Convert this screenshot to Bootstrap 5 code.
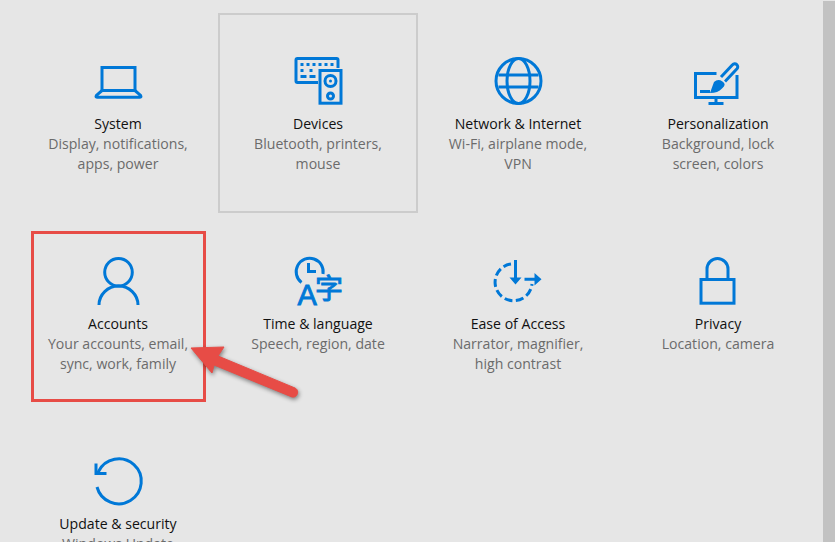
<!DOCTYPE html>
<html lang="en">
<head>
  <meta charset="UTF-8">
  <title>Settings</title>
  <link href="https://cdn.jsdelivr.net/npm/bootstrap@5.3.0/dist/css/bootstrap.min.css" rel="stylesheet">
  <style>
    html, body { height: 100%; }
    body {
      background: #e6e6e6;
      font-family: "Open Sans", "Noto Sans", sans-serif;
      font-size: 14.1px;
      line-height: 20px;
      overflow: hidden;
      position: relative;
    }
    .settings-pane { width: 823px; padding: 13px 0 0 18px; }
    .tile-grid { width: 800px; }
    .tile {
      width: 200px;
      height: 200px;
      border: 2px solid transparent;
      padding-top: 42px;
    }
    .tile.hovered { border-color: #ccc; }
    .tile-ico {
      display: block;
      width: 48px;
      height: 48px;
      margin: 0 auto 9px;
      overflow: visible;
      color: #0078d7;
      fill: none;
      stroke: currentColor;
      stroke-width: 3;
    }
    .tile-ico .solid { fill: currentColor; stroke: none; }
    .tile-ico text { fill: currentColor; stroke-width: .9; }
    .tile-title { color: #111; }
    .tile-desc { color: #6b6b6b; width: 150px; margin: 0 auto; }
    .scroll-thumb { width: 12px; margin-top: 1px; background: #c2c2c2; }
    .callout-box {
      position: absolute;
      left: 31px;
      top: 231px;
      width: 175px;
      height: 171px;
      border: 3px solid #e74c46;
    }
    .callout-arrow {
      position: absolute;
      left: 0;
      top: 0;
      width: 835px;
      height: 542px;
      filter: drop-shadow(1px 2px 2px rgba(0, 0, 0, .45));
    }
  </style>
</head>
<body class="d-flex">

  <div class="settings-pane flex-grow-0">
    <div class="tile-grid d-flex flex-wrap">

      <div class="tile text-center">
        <svg class="tile-ico" viewBox="0 0 48 48">
          <path d="M8 33V10.5H41V33"/>
          <path d="M8 33.5H41L46.6 38.4Q47.6 40.2 46 40.2H3Q1.4 40.2 2.4 38.4Z"/>
        </svg>
        <div class="tile-title">System</div>
        <div class="tile-desc">Display, notifications, apps, power</div>
      </div>

      <div class="tile hovered text-center">
        <svg class="tile-ico" viewBox="0 0 48 48">
          <path d="M24 25.5H3.5Q2 25.5 2 24V3Q2 1.5 3.5 1.5H42.5Q44 1.5 44 3V11"/>
          <rect x="26" y="13.5" width="21" height="32.700"/>
          <circle cx="36.500" cy="24" r="5.500"/>
          <circle class="solid" cx="36.500" cy="24" r="1.500"/>
          <circle cx="36.500" cy="39" r="3"/>
          <path class="solid" d="M6.500 6h3v3h-3zM12.500 6h3v3h-3zM18.500 6h3v3h-3zM24.500 6h3v3h-3zM30.500 6h3v3h-3zM36.500 6h3v3h-3zM6.500 12h3v3h-3zM15.500 12h3v3h-3zM6.500 18h6v3h-6zM15.500 18h6v3h-6z"/>
        </svg>
        <div class="tile-title">Devices</div>
        <div class="tile-desc">Bluetooth, printers, mouse</div>
      </div>

      <div class="tile text-center">
        <svg class="tile-ico" viewBox="0 0 48 48">
          <circle cx="24.500" cy="24" r="22.500"/>
          <ellipse cx="24.500" cy="24" rx="11.500" ry="22.500"/>
          <path d="M4.500 18H44.500M4.500 30H44.500"/>
        </svg>
        <div class="tile-title">Network &amp; Internet</div>
        <div class="tile-desc">Wi-Fi, airplane mode, VPN</div>
      </div>

      <div class="tile text-center">
        <svg class="tile-ico" viewBox="0 0 48 48">
          <path d="M22.500 16.500H1.500V40.500H43V18"/>
          <path d="M22 42V46.500M14.500 46.500H29.500"/>
          <path d="M6 34.500H16"/>
          <path d="M27 20L38.500 7.800A3 3 0 0 1 43 11.800L31 24.500"/>
          <path class="solid" d="M20 25Q24 21.500 28.500 24.500T28 31.500Q24 36 16 36Q18.500 29 20 25Z"/>
          <path d="M28 21.500L30 23.500" stroke="#e6e6e6" stroke-width="2"/>
        </svg>
        <div class="tile-title">Personalization</div>
        <div class="tile-desc">Background, lock screen, colors</div>
      </div>

      <div class="tile text-center">
        <svg class="tile-ico" viewBox="0 0 48 48">
          <circle cx="24.500" cy="15.300" r="13.800"/>
          <path d="M5 48A19.500 19 0 0 1 44 48"/>
        </svg>
        <div class="tile-title">Accounts</div>
        <div class="tile-desc">Your accounts, email, sync, work, family</div>
      </div>

      <div class="tile text-center">
        <svg class="tile-ico" viewBox="0 0 48 48">
          <path d="M7.500 25.500A13.500 13.500 0 1 1 29 17"/>
          <path d="M14.500 6V14.500H22"/>
          <text x="3.500" y="48" font-family="Liberation Sans" font-size="29">A</text>
          <text x="21" y="42" font-family="Noto Sans CJK SC" font-size="28">字</text>
        </svg>
        <div class="tile-title">Time &amp; language</div>
        <div class="tile-desc">Speech, region, date</div>
      </div>

      <div class="tile text-center">
        <svg class="tile-ico" viewBox="0 0 48 48">
          <path stroke-dasharray="8 3.500" d="M17 6.900A18.500 18.500 0 1 0 38 27"/>
          <path d="M21.500 3V24M30.500 22.300H43"/>
          <path class="solid" d="M15.500 20.500H27.500L21.500 27.500ZM40.500 16L47.500 22.300L40.500 28.500Z"/>
        </svg>
        <div class="tile-title">Ease of Access</div>
        <div class="tile-desc">Narrator, magnifier, high contrast</div>
      </div>

      <div class="tile text-center">
        <svg class="tile-ico" viewBox="0 0 48 48">
          <rect x="7" y="22.500" width="33" height="23.700"/>
          <path d="M13 22V12A10.500 10.500 0 0 1 34 12V22"/>
        </svg>
        <div class="tile-title">Privacy</div>
        <div class="tile-desc">Location, camera</div>
      </div>

      <div class="tile text-center">
        <svg class="tile-ico" viewBox="0 0 48 48">
          <path d="M3 30A22.500 22.500 0 1 0 4.500 14.500L3 16"/>
          <path d="M2 6.500V16.500H12.500"/>
        </svg>
        <div class="tile-title">Update &amp; security</div>
        <div class="tile-desc">Windows Update</div>
      </div>

    </div>
  </div>

  <div class="scroll-thumb flex-shrink-0"></div>

  <div class="callout-box"></div>
  <svg class="callout-arrow" viewBox="0 0 835 542">
    <path fill="#e74c46" stroke="#e74c46" stroke-linejoin="round" stroke-width="1" d="M191 348L224 347L218 356L295 388A4.800 4.800 0 0 1 292 397L214 365L212 373Z"/>
  </svg>

</body>
</html>
